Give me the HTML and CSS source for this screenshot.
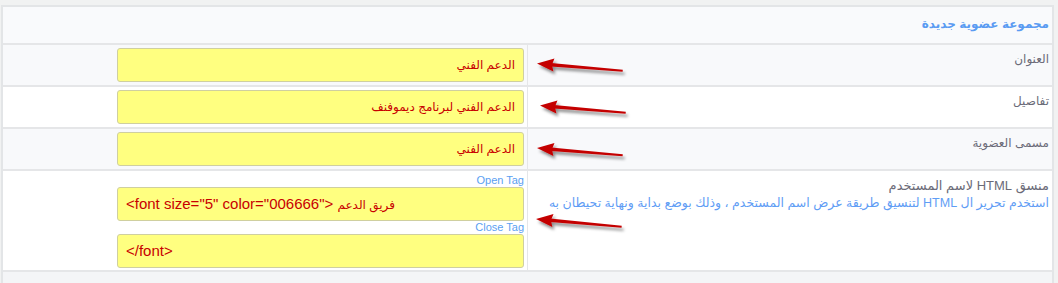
FILE: index.html
```html
<!DOCTYPE html>
<html lang="ar">
<head>
	<meta charset="UTF-8">
	<title>مجموعة عضوية جديدة</title>
	<link rel="stylesheet" href="styles.css">
</head>
<body>
	<div class="panel" dir="rtl">
		<div class="head">مجموعة عضوية جديدة</div>
		<div class="row odd">
			<div class="label">العنوان</div>
			<div class="field"><div class="box">الدعم الفني</div></div>
		</div>
		<div class="row">
			<div class="label">تفاصيل</div>
			<div class="field"><div class="box">الدعم الفني لبرنامج ديموفنف</div></div>
		</div>
		<div class="row odd">
			<div class="label">مسمى العضوية</div>
			<div class="field"><div class="box">الدعم الفني</div></div>
		</div>
		<div class="row">
			<div class="label">
				<div class="title">منسق HTML لاسم المستخدم</div>
				<div class="desc">استخدم تحرير ال HTML لتنسيق طريقة عرض اسم المستخدم ، وذلك بوضع بداية ونهاية تحيطان به</div>
			</div>
			<div class="field stack">
				<div class="tag">Open Tag</div>
				<div class="box code" dir="ltr">&lt;font size="5" color="006666"&gt; <span class="ar">فريق الدعم</span></div>
				<div class="tag">Close Tag</div>
				<div class="box code" dir="ltr">&lt;/font&gt;</div>
			</div>
		</div>
		<div class="foot"></div>
	</div>

	<svg class="arrows" width="1058" height="283" viewBox="0 0 1058 283">
		<defs>
			<filter id="shade" x="-20%" y="-50%" width="140%" height="200%">
				<feDropShadow dx="2" dy="3" stdDeviation="1.6" flood-color="#000" flood-opacity="0.45"/>
			</filter>
			<g id="arrow">
				<polygon points="0,0 17,-6.5 15,0 17,6.5" fill="#c40000"/>
				<polygon points="14,-1.8 86,-1 86,1 14,1.8" fill="#c40000"/>
			</g>
		</defs>
		<g filter="url(#shade)">
			<use href="#arrow" transform="translate(537 63.5) rotate(4.8)"/>
			<use href="#arrow" transform="translate(540 105.5) rotate(4.8)"/>
			<use href="#arrow" transform="translate(537 148) rotate(4.8)"/>
			<use href="#arrow" transform="translate(536 219) rotate(5.2)"/>
		</g>
	</svg>
</body>
</html>
```

FILE: styles.css
```css
body{margin: 0;padding: 5px 4px 0 1px;background: #f1f2f2;position: relative;
	font-family: "Liberation Sans", "DejaVu Sans", sans-serif;}
.panel{border: 2px solid #e3e5e7;background: #fff;}
.head{height: 36px;line-height: 34px;padding-right: 3px;background: #f9fafc;
	color: #5a9bf2;font-size: 12px;font-weight: bold;}
.row{display: flex;border-top: 2px solid #e5e6e8;}
.row.odd{background: #f8f9fb;}
.label{width: 521px;padding: 7px 3px 0 0;border-left: 1px solid #e5e6e8;
	color: #6b6b78;font-size: 12px;}
.label .title{font-size: 13px;}
.label .desc{margin-top: 2px;color: #5f9df5;font-size: 12.5px;white-space: nowrap;}
.field{flex: 1;display: flex;flex-direction: column;align-items: flex-start;padding: 3px 3px 3px 0;}
.stack{padding: 3px 3px 2px 0;}
.box{width: 397px;height: 32px;line-height: 32px;padding: 0 8px 0 0;background: #ffff80;
	border: 1px solid #cfcfa0;border-radius: 3px;color: #c80000;font-size: 12px;}
.box.code{padding: 0 0 0 8px;font-size: 15px;}
.box .ar{font-size: 12px;}
.tag{height: 13px;line-height: 13px;color: #5ba0f2;font-size: 11px;}
.foot{height: 11px;border-top: 2px solid #e5e6e8;background: #f4f5f7;}
.arrows{position: absolute;left: 0;top: 0;pointer-events: none;}
```
